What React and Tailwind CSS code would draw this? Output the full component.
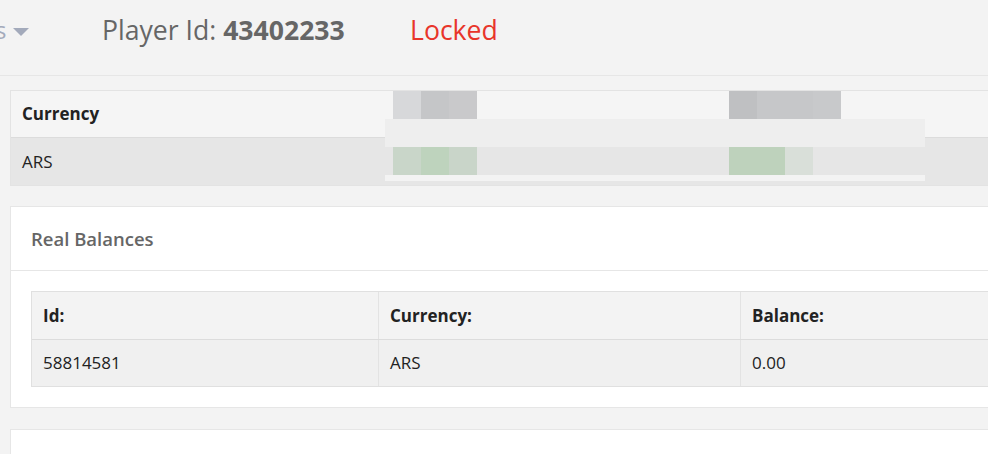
import React from "react";

function Blur() {
  // pixelated redaction overlay lying over the currency table
  return (
    <div className="pointer-events-none absolute left-[374px] top-0 flex w-[540px] flex-col">
      <div className="flex h-[28px] pl-[8px]">
        <div className="w-[28px] bg-[#d7d8da]" />
        <div className="w-[28px] bg-[#c5c6c8]" />
        <div className="w-[28px] bg-[#c9c9cb]" />
        <div className="w-[252px]" />
        <div className="w-[28px] bg-[#bfc0c2]" />
        <div className="w-[56px] bg-[#c6c7c9]" />
        <div className="w-[28px] bg-[#c8c9cb]" />
      </div>
      <div className="h-[28px] bg-[#eeeeee]" />
      <div className="flex h-[28px] pl-[8px]">
        <div className="w-[28px] bg-[#c9d6c9]" />
        <div className="w-[28px] bg-[#bed3bd]" />
        <div className="w-[28px] bg-[#c9d5c9]" />
        <div className="w-[252px]" />
        <div className="w-[56px] bg-[#bed2bc]" />
        <div className="w-[28px] bg-[#d9dfd9]" />
      </div>
      <div className="h-[6px] bg-[#f3f3f3]" />
    </div>
  );
}

export default function App() {
  return (
    <div
      className="h-[454px] w-[988px] overflow-hidden bg-[#f3f3f3] text-[#222]"
      style={{ fontFamily: '"Open Sans", "Noto Sans", sans-serif' }}
    >
      {/* header */}
      <div className="flex h-[76px] items-start border-b border-[#e6e6e6] pt-[13px] text-[26.6px] leading-[34px]">
        <div className="flex w-[102px] items-center">
          <span className="ml-[-5px] text-[24px] text-[#a3aabb]">s</span>
          <svg width="16" height="8" viewBox="0 0 16 8" className="ml-[7px] mt-[3px]">
            <path d="M0 0 L16 0 L8 8 Z" fill="#a3aabb" />
          </svg>
        </div>
        <div className="w-[308px] text-[#666]">
          Player Id: <span className="font-bold">43402233</span>
        </div>
        <div className="text-[#e8352a]">Locked</div>
      </div>

      <div className="pl-[10px] pt-[14px]">
        {/* top table */}
        <div className="relative w-[1000px] border border-r-0 border-[#e3e3e3] text-[17px]">
          <div className="flex h-[47px] items-center border-b border-[#dcdcdc] bg-[#f5f5f5] px-[11px] font-bold">
            Currency
          </div>
          <div className="flex h-[47px] items-center bg-[#e6e6e6] px-[11px]">ARS</div>
          <Blur />
        </div>

        {/* real balances card */}
        <div className="mt-[20px] w-[1000px] border border-r-0 border-[#e6e6e6] bg-white">
          <div className="flex h-[64px] items-center border-b border-[#e6e6e6] px-[20px] text-[18.5px] font-semibold text-[#666]">
            Real Balances
          </div>
          <div className="px-[20px] py-[20px]">
            <div className="w-[980px] border border-r-0 border-[#e0e0e0] text-[17px]">
              <div className="grid h-[48px] grid-cols-[347px_362px_1fr] border-b border-[#dcdcdc] bg-[#f3f3f3] font-bold">
                <div className="flex items-center border-r border-[#e3e3e3] px-[11px]">Id:</div>
                <div className="flex items-center border-r border-[#e3e3e3] px-[11px]">Currency:</div>
                <div className="flex items-center px-[11px]">Balance:</div>
              </div>
              <div className="grid h-[46px] grid-cols-[347px_362px_1fr] bg-[#f0f0f0]">
                <div className="flex items-center border-r border-[#e3e3e3] px-[11px]">58814581</div>
                <div className="flex items-center border-r border-[#e3e3e3] px-[11px]">ARS</div>
                <div className="flex items-center px-[11px]">0.00</div>
              </div>
            </div>
          </div>
        </div>

        {/* next card */}
        <div className="mt-[21px] h-[60px] w-[1000px] border border-r-0 border-[#e6e6e6] bg-white" />
      </div>
    </div>
  );
}
